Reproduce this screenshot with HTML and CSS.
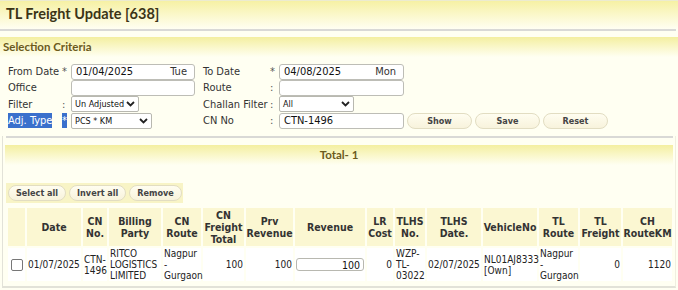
FILE: index.html
```html
<!DOCTYPE html>
<html lang="en">
<head>
    <meta charset="UTF-8">
    <title>TL Freight Update</title>
    <link rel="stylesheet" href="styles.css">
</head>
<body>
    <div class="page-title">TL Freight Update [638]</div>
    <div class="rule"></div>

    <div class="section-head">Selection Criteria</div>
    <div class="criteria">
        <span class="lbl">From Date</span><span class="mark">*</span>
        <div class="field wide"><span>01/04/2025</span><span class="day">Tue</span></div>
        <span class="lbl lbl2">To Date</span><span class="mark">*</span>
        <div class="field wide"><span>04/08/2025</span><span class="day">Mon</span></div>
        <span></span>

        <span class="lbl">Office</span><span class="mark"></span>
        <div class="field wide"></div>
        <span class="lbl lbl2">Route</span><span class="mark">:</span>
        <div class="field wide"></div>
        <span></span>

        <span class="lbl">Filter</span><span class="mark">:</span>
        <div class="select s-filter"><span>Un Adjusted</span>
            <svg width="9" height="6" viewBox="0 0 9 6"><path d="M1 1l3.5 3.5L8 1" fill="none" stroke="#222" stroke-width="1.8"/></svg>
        </div>
        <span class="lbl lbl2">Challan Filter</span><span class="mark">:</span>
        <div class="select s-challan"><span>All</span>
            <svg width="9" height="6" viewBox="0 0 9 6"><path d="M1 1l3.5 3.5L8 1" fill="none" stroke="#222" stroke-width="1.8"/></svg>
        </div>
        <span></span>

        <span class="lbl"><span class="picked">Adj. Type</span></span><span class="mark"><span class="picked">*</span></span>
        <div class="select s-adj"><span>PCS * KM</span>
            <svg width="9" height="6" viewBox="0 0 9 6"><path d="M1 1l3.5 3.5L8 1" fill="none" stroke="#222" stroke-width="1.8"/></svg>
        </div>
        <span class="lbl lbl2">CN No</span><span class="mark">:</span>
        <div class="field wide"><span class="big">CTN-1496</span></div>
        <div class="actions">
            <button class="pill">Show</button>
            <button class="pill">Save</button>
            <button class="pill">Reset</button>
        </div>
    </div>

    <div class="results">
        <div class="rule inner"></div>
        <div class="section-head total">Total- 1</div>

        <div class="tools">
            <button class="pill sm">Select all</button>
            <button class="pill sm">Invert all</button>
            <button class="pill sm">Remove</button>
        </div>

        <table class="grid">
            <thead>
                <tr>
                    <th class="c-chk"></th>
                    <th class="c-date">Date</th>
                    <th class="c-cn">CN No.</th>
                    <th class="c-party">Billing Party</th>
                    <th class="c-route">CN Route</th>
                    <th class="c-frt">CN Freight Total</th>
                    <th class="c-prv">Prv Revenue</th>
                    <th class="c-rev">Revenue</th>
                    <th class="c-lr">LR Cost</th>
                    <th class="c-tlhs">TLHS No.</th>
                    <th class="c-tdate">TLHS Date.</th>
                    <th class="c-veh">VehicleNo</th>
                    <th class="c-troute">TL Route</th>
                    <th class="c-tfrt">TL Freight</th>
                    <th class="c-km">CH RouteKM</th>
                </tr>
            </thead>
            <tbody>
                <tr>
                    <td class="ctr"><span class="chk"></span></td>
                    <td>01/07/2025</td>
                    <td>CTN-1496</td>
                    <td>RITCO LOGISTICS LIMITED</td>
                    <td>Nagpur - Gurgaon</td>
                    <td class="num">100</td>
                    <td class="num">100</td>
                    <td><input class="rev" type="text" value="100"></td>
                    <td class="num">0</td>
                    <td>WZP-TL-03022</td>
                    <td>02/07/2025</td>
                    <td>NL01AJ8333 [Own]</td>
                    <td>Nagpur - Gurgaon</td>
                    <td class="num">0</td>
                    <td class="num">1120</td>
                </tr>
            </tbody>
        </table>
    </div>
</body>
</html>
```

FILE: styles.css
```css
body {
    margin: 0;
    background-color: #fffff2;
    font-family: "DejaVu Sans Condensed", "DejaVu Sans", sans-serif;
    font-size: 11px;
    color: #333;
}

.page-title {
    height: 28px;
    line-height: 26px;
    padding-left: 6px;
    border-top: 1px solid #ecebd0;
    background: linear-gradient(#f6f1a4, #fffff2);
    font-family: Lato, sans-serif;
    font-weight: bold;
    font-size: 14.5px;
    color: #3b3417;
}

.rule {
    height: 2px;
    margin-right: 2px;
    background-color: #d9d9d6;
}

.section-head {
    margin-top: 6px;
    height: 20px;
    line-height: 20px;
    padding-left: 3px;
    background: linear-gradient(#f4efa0, #fffff2);
    font-family: Lato, sans-serif;
    font-weight: bold;
    font-size: 11.5px;
    color: #6b5a1c;
}

.criteria {
    display: grid;
    grid-template-columns: 54px 9px 124px 8px 67px 9px 125px 1fr;
    grid-auto-rows: 15px;
    row-gap: 1.4px;
    align-items: center;
    padding: 7px 0 8px 8px;
}

.criteria .lbl2 {
    grid-column: 5;
}

.mark {
    color: #555;
}

.picked {
    background-color: #3a70cc;
    color: white;
    padding: 1px 0;
}

.field {
    display: flex;
    justify-content: space-between;
    height: 14px;
    line-height: 14px;
    padding: 0 7px 0 4px;
    border: 1px solid #bdbdb6;
    border-radius: 3px;
    background-color: white;
    font-size: 11px;
    color: #111;
}

.field .day {
    color: #333;
}

.select {
    display: flex;
    align-items: center;
    justify-content: space-between;
    height: 14px;
    padding: 0 3px;
    border: 1px solid #b8b8b0;
    border-radius: 2px;
    background-color: white;
    font-size: 9px;
    color: #111;
}

.s-filter { width: 60px; }
.s-challan { width: 67px; }
.s-adj { width: 73px; }

.actions {
    display: flex;
    gap: 3px;
    padding-left: 3px;
}

.pill {
    width: 65px;
    height: 16px;
    padding: 0;
    border: 1px solid #e2ddc2;
    border-radius: 8px;
    background: linear-gradient(#fffdf0, #f8f3dc);
    font-family: "DejaVu Sans Condensed", sans-serif;
    font-weight: bold;
    font-size: 9px;
    color: #444;
}

.results {
    margin: 0 2px;
    border-left: 1px solid #e2e2d8;
    border-right: 1px solid #f0efe0;
    border-bottom: 2px solid #e2e2d8;
    padding-bottom: 3px;
}

.rule.inner {
    margin: 0 2px 0 3px;
}

.total {
    margin-top: 7px;
    margin-left: 2px;
    margin-right: 2px;
    text-align: center;
    padding-left: 0;
}

.tools {
    display: inline-flex;
    gap: 3px;
    margin: 18px 0 0 3px;
    padding: 2px 1px 2px 2px;
    background-color: #f8f4c6;
}

.pill.sm {
    width: auto;
    padding: 0 7px;
}

.grid {
    table-layout: fixed;
    width: 668px;
    margin: 3px 0 0 3px;
    border-spacing: 2px;
    color: #222;
}

.grid th {
    box-sizing: border-box;
    height: 38px;
    padding: 0;
    background-color: #fbf7d2;
    font-size: 10.5px;
    line-height: 12px;
    color: #333;
    vertical-align: middle;
}

.grid td {
    height: 33px;
    padding: 0 1px;
    background-color: white;
    font-size: 10px;
    line-height: 11px;
    text-align: left;
    vertical-align: middle;
}

.grid td.num {
    text-align: right;
}

.grid td.ctr {
    text-align: center;
}

.c-chk { width: 17px; }
.c-date { width: 54px; }
.c-cn { width: 24px; }
.c-party { width: 52px; }
.c-route { width: 38px; }
.c-frt { width: 41px; }
.c-prv { width: 47px; }
.c-rev { width: 70px; }
.c-lr { width: 26px; }
.c-tlhs { width: 30px; }
.c-tdate { width: 54px; }
.c-veh { width: 54px; }
.c-troute { width: 39px; }
.c-tfrt { width: 41px; }
.c-km { width: 49px; }

.chk {
    display: inline-block;
    width: 10px;
    height: 10px;
    border: 1px solid #777;
    border-radius: 2px;
    background-color: white;
    vertical-align: middle;
}

.rev {
    box-sizing: border-box;
    width: 68px;
    height: 13px;
    padding: 0 3px;
    border: 1px solid #b8b8b0;
    border-radius: 3px;
    font-family: "DejaVu Sans Condensed", sans-serif;
    font-size: 10.5px;
    text-align: right;
    color: #111;
}
```
